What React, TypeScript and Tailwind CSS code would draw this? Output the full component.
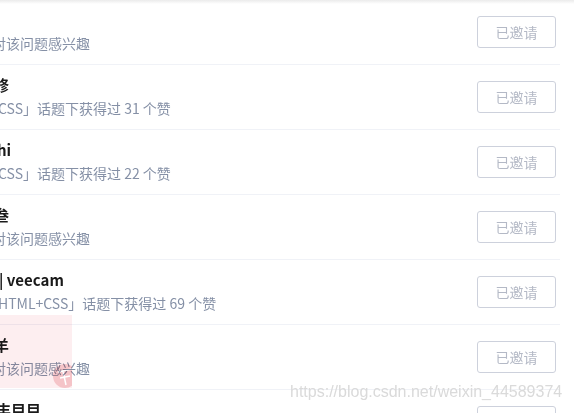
import React from 'react';

interface Invitee {
  id: number;
  name: string;
  nameClass: string;
  desc: string;
  descClass: string;
}

// left side of the list is cut off in the screenshot, so lines are shifted left
const invitees: Invitee[] = [
  { id: 1, name: '', nameClass: '', desc: '对该问题感兴趣', descClass: '-ml-[8px]' },
  { id: 2, name: '修', nameClass: '-ml-[6px]', desc: 'CSS」话题下获得过 31 个赞', descClass: '-ml-[2px]' },
  { id: 3, name: 'hi', nameClass: '-ml-[3px]', desc: 'CSS」话题下获得过 22 个赞', descClass: '-ml-[2px]' },
  { id: 4, name: '叁', nameClass: '-ml-[6px]', desc: '对该问题感兴趣', descClass: '-ml-[8px]' },
  { id: 5, name: '| veecam', nameClass: '-ml-[1px]', desc: 'HTML+CSS」话题下获得过 69 个赞', descClass: '-ml-[2px]' },
  { id: 6, name: '羊', nameClass: '-ml-[6px]', desc: '对该问题感兴趣', descClass: '-ml-[8px]' },
  { id: 7, name: '丰目目', nameClass: '-ml-[4px]', desc: '对该问题感兴趣', descClass: '-ml-[8px]' },
];

const App: React.FC = () => {
  return (
    <div
      className="relative w-[574px] h-[413px] overflow-hidden bg-white"
      style={{ fontFamily: '"Noto Sans CJK SC", "Liberation Sans", sans-serif' }}
    >
      <div className="w-[560px]">
        {invitees.map((item) => (
          <div
            key={item.id}
            className="flex items-center justify-between h-[65px] border-b border-[#f0f2f7] pr-[4px]"
          >
            <div className="flex flex-col justify-center overflow-hidden">
              <div className={`whitespace-nowrap text-[15px] leading-[22px] font-bold text-[#1a1a1a] ${item.nameClass}`}>
                {item.name || '\u00a0'}
              </div>
              <div className={`whitespace-nowrap text-[14px] leading-[24px] text-[#8590a6] ${item.descClass}`}>
                {item.desc}
              </div>
            </div>
            <button className="w-[79px] h-[32px] shrink-0 rounded-[3px] border border-[#cdd1dc] text-[14px] text-[#b4b9c6] bg-white">
              已邀请
            </button>
          </div>
        ))}
      </div>

      {/* top shadow */}
      <div className="absolute left-0 top-0 w-full h-[4px] bg-gradient-to-b from-[#ebebeb] to-transparent" />

      {/* watermark overlay */}
      <div className="absolute left-0 top-[315px] w-[72px] h-[73px] overflow-hidden bg-[#fdeef0] mix-blend-multiply">
        <svg className="absolute left-[52px] top-[48px]" width="26" height="26" viewBox="0 0 26 26">
          <circle cx="13" cy="13" r="12" fill="#f5c4c8" />
          <path d="M6 9 L20 6 M11 8 L14 22 M8 15 L18 13" stroke="#fff" strokeWidth="1.5" fill="none" />
        </svg>
      </div>
      <div
        className="absolute left-[290px] top-[381px] text-[16px] leading-[22px] text-[#dadada] whitespace-nowrap"
        style={{ fontFamily: '"Liberation Sans", Arial, sans-serif' }}
      >
        https://blog.csdn.net/weixin_44589374
      </div>
    </div>
  );
};

export default App;
